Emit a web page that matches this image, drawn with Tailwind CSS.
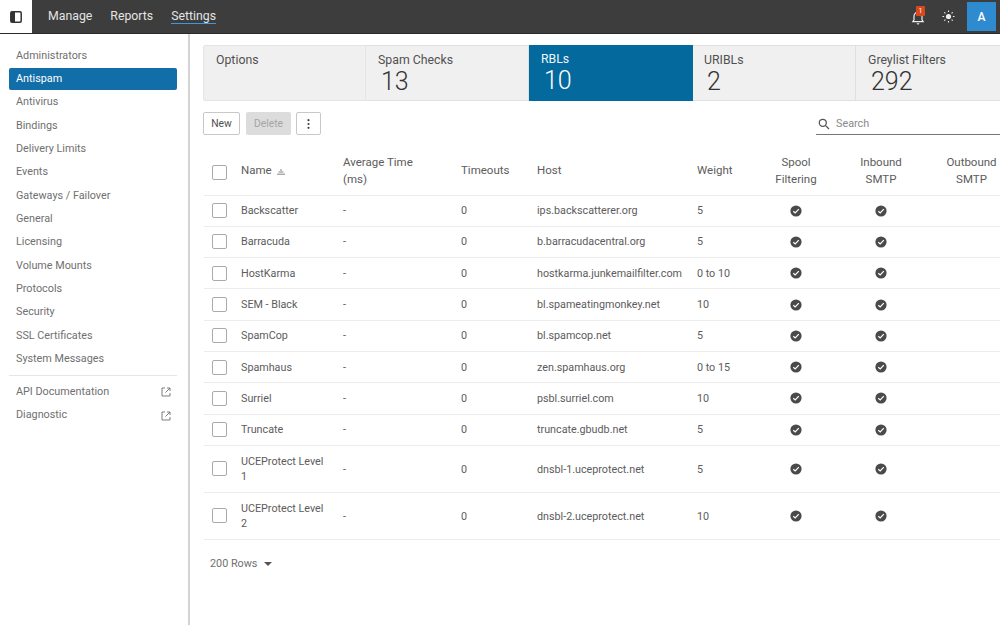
<!DOCTYPE html>
<html lang="en">
<head>
  <meta charset="UTF-8" />
  <title>Antispam RBLs</title>
  <script src="https://cdn.jsdelivr.net/npm/@tailwindcss/browser@4"></script>
</head>
<body class="bg-white text-[#505050] font-['Roboto',sans-serif] h-[625px] w-[1000px] overflow-hidden">

<header class="h-[34px] flex items-stretch bg-[#3d3d3d] border-b border-[#2a2a2a] text-[#e4e4e4] text-[12.3px]">
  <div class="w-[32px] bg-white flex items-center justify-center">
    <svg width="12" height="12" viewBox="0 0 12 12"><rect x="0.8" y="0.8" width="10.4" height="10.4" rx="1.2" fill="none" stroke="#333" stroke-width="1.5"/><rect x="1" y="1" width="4" height="10" fill="#333"/></svg>
  </div>
  <nav class="flex items-center gap-[18px] pl-[16px]">
    <span>Manage</span>
    <span>Reports</span>
    <span class="border-b border-[#3b9ad9] leading-[14px]">Settings</span>
  </nav>
  <div class="ml-auto flex items-center">
    <div class="relative w-[14px] h-[16px] mr-[17px]">
      <svg width="14" height="16" viewBox="0 0 14 16" class="absolute top-[1px] left-0"><path d="M7 2.2a4 4 0 0 0-4 4v3.6L1.8 11.6h10.4L11 9.8V6.2a4 4 0 0 0-4-4z" fill="none" stroke="#eee" stroke-width="1.2"/><path d="M5.6 13.2h2.8a1.4 1.4 0 0 1-2.8 0z" fill="#eee"/></svg>
      <span class="absolute -top-[3px] left-[5px] w-[9px] h-[10px] rounded-[1px] bg-[#d9481c] text-white text-[7px] leading-[10px] text-center">1</span>
    </div>
    <svg width="13" height="13" viewBox="0 0 13 13" class="mr-[12px]"><circle cx="6.5" cy="6.5" r="2.6" fill="#eee"/><path d="M6.5 0.5v1.6M6.5 10.9v1.6M0.5 6.5h1.6M10.9 6.5h1.6M2.3 2.3l1.1 1.1M9.6 9.6l1.1 1.1M2.3 10.7l1.1-1.1M9.6 3.4l1.1-1.1" stroke="#eee" stroke-width="1.1"/></svg>
    <div class="w-[29px] h-[29px] mr-[4px] bg-[#2e8bd0] text-white text-[12px] font-medium flex items-center justify-center">A</div>
  </div>
</header>

<div class="flex h-[591px]">
  <aside class="w-[190px] shrink-0 border-r-2 border-[#d4d4d4] pl-[9px] pr-[11px] pt-[10px] text-[10.8px] text-[#707070]">
    <ul>
      <li class="h-[24.3px] pl-[7px] flex items-center">Administrators</li>
      <li class="h-[22px] pl-[7px] flex items-center bg-[#126ea8] text-white rounded-[2px]">Antispam</li>
      <li class="h-[24px] pl-[7px] flex items-center">Antivirus</li>
      <li class="h-[23.3px] pl-[7px] flex items-center">Bindings</li>
      <li class="h-[23.3px] pl-[7px] flex items-center">Delivery Limits</li>
      <li class="h-[23.3px] pl-[7px] flex items-center">Events</li>
      <li class="h-[23.3px] pl-[7px] flex items-center">Gateways / Failover</li>
      <li class="h-[23.3px] pl-[7px] flex items-center">General</li>
      <li class="h-[23.3px] pl-[7px] flex items-center">Licensing</li>
      <li class="h-[23.3px] pl-[7px] flex items-center">Volume Mounts</li>
      <li class="h-[23.3px] pl-[7px] flex items-center">Protocols</li>
      <li class="h-[23.3px] pl-[7px] flex items-center">Security</li>
      <li class="h-[23.3px] pl-[7px] flex items-center">SSL Certificates</li>
      <li class="h-[23.3px] pl-[7px] flex items-center">System Messages</li>
    </ul>
    <div class="border-t border-[#e6e6e6] mt-[4px] pt-[5px]">
      <div class="h-[23.3px] pl-[7px] pr-[6px] flex items-center justify-between">API Documentation
        <svg width="10" height="10" viewBox="0 0 10 10" fill="none" stroke="#707070" stroke-width="0.9"><path d="M4 1H1v8h8V6M6 1h3v3M9 1 4.5 5.5"/></svg>
      </div>
      <div class="h-[23.3px] pl-[7px] pr-[6px] flex items-center justify-between">Diagnostic
        <svg width="10" height="10" viewBox="0 0 10 10" fill="none" stroke="#707070" stroke-width="0.9"><path d="M4 1H1v8h8V6M6 1h3v3M9 1 4.5 5.5"/></svg>
      </div>
    </div>
  </aside>

  <main class="flex-1 min-w-0 overflow-hidden pl-[13px] pt-[11px]">
    <div class="flex h-[56px] w-[830px] text-[12.3px]">
      <div class="w-[163px] bg-[#f0f0f0] border border-[#e4e4e4] rounded-l-[2px] pl-[12px] pt-[5px]">Options</div>
      <div class="w-[163px] bg-[#f0f0f0] border-y border-r border-[#e0e0e0] pl-[12px] pt-[5px]">Spam Checks<div class="text-[25px] leading-[25px] font-light text-[#333] pl-[3px]">13</div></div>
      <div class="w-[164px] bg-[#04699c] text-[#eef6fb] pl-[12px] pt-[5px]">RBLs<div class="text-[25px] leading-[25px] font-light text-white pl-[3px]">10</div></div>
      <div class="w-[163px] bg-[#f0f0f0] border-y border-r border-[#e0e0e0] pl-[11px] pt-[5px]">URIBLs<div class="text-[25px] leading-[25px] font-light text-[#333] pl-[3px]">2</div></div>
      <div class="w-[177px] bg-[#f0f0f0] border-y border-[#e0e0e0] pl-[12px] pt-[5px]">Greylist Filters<div class="text-[25px] leading-[25px] font-light text-[#333] pl-[3px]">292</div></div>
    </div>

    <div class="flex items-stretch h-[23px] mt-[11px] text-[10.3px]">
      <button class="w-[37px] border border-[#c8c8c8] rounded-[2px] text-[#505050]">New</button>
      <button class="w-[45px] ml-[6px] bg-[#dcdcdc] rounded-[2px] text-[#a5a5a5]">Delete</button>
      <button class="w-[25px] ml-[5px] border border-[#c8c8c8] rounded-[2px] flex items-center justify-center">
        <svg width="3" height="10" viewBox="0 0 3 10" fill="#444"><circle cx="1.5" cy="1.2" r="1.1"/><circle cx="1.5" cy="5" r="1.1"/><circle cx="1.5" cy="8.8" r="1.1"/></svg>
      </button>
      <div class="ml-auto w-[184px] border-b border-[#777] flex items-center pl-[2px] pt-[2px] text-[10.8px] text-[#8a8a8a]">
        <svg width="12" height="12" viewBox="0 0 12 12" fill="none" stroke="#555" stroke-width="1.3" class="mr-[6px]"><circle cx="4.8" cy="4.8" r="3.5"/><path d="M7.4 7.4 11 11"/></svg>
        Search
      </div>
    </div>

    <table class="mt-[15px] ml-[1px] table-fixed w-[812px] border-collapse text-[10.75px] text-[#5c5c5c]">
      <colgroup>
        <col class="w-[37px]"><col class="w-[102px]"><col class="w-[118px]"><col class="w-[76px]"><col class="w-[160px]"><col class="w-[60px]"><col class="w-[78px]"><col class="w-[92px]"><col class="w-[89px]">
      </colgroup>
      <thead class="text-[#5c5c5c] text-[11.5px] leading-[17px]">
        <tr class="h-[45px] border-b border-[#ececec] [&>th:nth-child(n+2)]:pb-[3px]">
          <th class="font-normal text-left pl-[8px]"><span class="block w-[15px] h-[15px] border border-[#aaa] rounded-[2px]"></span></th>
          <th class="font-normal text-left">Name <svg width="8" height="6" viewBox="0 0 8 6" class="inline ml-[2px] align-[-0.5px]" stroke="#666" stroke-width="0.8"><path d="M3 1h2M1.5 3h5M0 5.2h8"/></svg></th>
          <th class="font-normal text-left">Average Time<br>(ms)</th>
          <th class="font-normal text-left">Timeouts</th>
          <th class="font-normal text-left">Host</th>
          <th class="font-normal text-left">Weight</th>
          <th class="font-normal text-center">Spool<br>Filtering</th>
          <th class="font-normal text-center">Inbound<br>SMTP</th>
          <th class="font-normal text-center">Outbound<br>SMTP</th>
        </tr>
      </thead>
      <tbody class="[&_td:nth-child(n+2):nth-child(-n+6)]:pt-[1px]">
        <tr class="h-[31.3px] border-b border-[#ececec]">
          <td class="pl-[8px]"><span class="block w-[15px] h-[15px] border border-[#aaa] rounded-[2px]"></span></td><td>Backscatter</td><td>-</td><td>0</td><td>ips.backscatterer.org</td><td>5</td>
          <td><svg width="12" height="12" viewBox="0 0 12 12" class="mx-auto"><circle cx="6" cy="6" r="5.6" fill="#4a4a4a"/><path d="M3.3 6.2 5.2 8l3.6-3.8" fill="none" stroke="#fff" stroke-width="1.2"/></svg></td>
          <td><svg width="12" height="12" viewBox="0 0 12 12" class="mx-auto"><circle cx="6" cy="6" r="5.6" fill="#4a4a4a"/><path d="M3.3 6.2 5.2 8l3.6-3.8" fill="none" stroke="#fff" stroke-width="1.2"/></svg></td><td></td>
        </tr>
        <tr class="h-[31.3px] border-b border-[#ececec]">
          <td class="pl-[8px]"><span class="block w-[15px] h-[15px] border border-[#aaa] rounded-[2px]"></span></td><td>Barracuda</td><td>-</td><td>0</td><td>b.barracudacentral.org</td><td>5</td>
          <td><svg width="12" height="12" viewBox="0 0 12 12" class="mx-auto"><circle cx="6" cy="6" r="5.6" fill="#4a4a4a"/><path d="M3.3 6.2 5.2 8l3.6-3.8" fill="none" stroke="#fff" stroke-width="1.2"/></svg></td>
          <td><svg width="12" height="12" viewBox="0 0 12 12" class="mx-auto"><circle cx="6" cy="6" r="5.6" fill="#4a4a4a"/><path d="M3.3 6.2 5.2 8l3.6-3.8" fill="none" stroke="#fff" stroke-width="1.2"/></svg></td><td></td>
        </tr>
        <tr class="h-[31.3px] border-b border-[#ececec]">
          <td class="pl-[8px]"><span class="block w-[15px] h-[15px] border border-[#aaa] rounded-[2px]"></span></td><td>HostKarma</td><td>-</td><td>0</td><td>hostkarma.junkemailfilter.com</td><td>0 to 10</td>
          <td><svg width="12" height="12" viewBox="0 0 12 12" class="mx-auto"><circle cx="6" cy="6" r="5.6" fill="#4a4a4a"/><path d="M3.3 6.2 5.2 8l3.6-3.8" fill="none" stroke="#fff" stroke-width="1.2"/></svg></td>
          <td><svg width="12" height="12" viewBox="0 0 12 12" class="mx-auto"><circle cx="6" cy="6" r="5.6" fill="#4a4a4a"/><path d="M3.3 6.2 5.2 8l3.6-3.8" fill="none" stroke="#fff" stroke-width="1.2"/></svg></td><td></td>
        </tr>
        <tr class="h-[31.3px] border-b border-[#ececec]">
          <td class="pl-[8px]"><span class="block w-[15px] h-[15px] border border-[#aaa] rounded-[2px]"></span></td><td>SEM - Black</td><td>-</td><td>0</td><td>bl.spameatingmonkey.net</td><td>10</td>
          <td><svg width="12" height="12" viewBox="0 0 12 12" class="mx-auto"><circle cx="6" cy="6" r="5.6" fill="#4a4a4a"/><path d="M3.3 6.2 5.2 8l3.6-3.8" fill="none" stroke="#fff" stroke-width="1.2"/></svg></td>
          <td><svg width="12" height="12" viewBox="0 0 12 12" class="mx-auto"><circle cx="6" cy="6" r="5.6" fill="#4a4a4a"/><path d="M3.3 6.2 5.2 8l3.6-3.8" fill="none" stroke="#fff" stroke-width="1.2"/></svg></td><td></td>
        </tr>
        <tr class="h-[31.3px] border-b border-[#ececec]">
          <td class="pl-[8px]"><span class="block w-[15px] h-[15px] border border-[#aaa] rounded-[2px]"></span></td><td>SpamCop</td><td>-</td><td>0</td><td>bl.spamcop.net</td><td>5</td>
          <td><svg width="12" height="12" viewBox="0 0 12 12" class="mx-auto"><circle cx="6" cy="6" r="5.6" fill="#4a4a4a"/><path d="M3.3 6.2 5.2 8l3.6-3.8" fill="none" stroke="#fff" stroke-width="1.2"/></svg></td>
          <td><svg width="12" height="12" viewBox="0 0 12 12" class="mx-auto"><circle cx="6" cy="6" r="5.6" fill="#4a4a4a"/><path d="M3.3 6.2 5.2 8l3.6-3.8" fill="none" stroke="#fff" stroke-width="1.2"/></svg></td><td></td>
        </tr>
        <tr class="h-[31.3px] border-b border-[#ececec]">
          <td class="pl-[8px]"><span class="block w-[15px] h-[15px] border border-[#aaa] rounded-[2px]"></span></td><td>Spamhaus</td><td>-</td><td>0</td><td>zen.spamhaus.org</td><td>0 to 15</td>
          <td><svg width="12" height="12" viewBox="0 0 12 12" class="mx-auto"><circle cx="6" cy="6" r="5.6" fill="#4a4a4a"/><path d="M3.3 6.2 5.2 8l3.6-3.8" fill="none" stroke="#fff" stroke-width="1.2"/></svg></td>
          <td><svg width="12" height="12" viewBox="0 0 12 12" class="mx-auto"><circle cx="6" cy="6" r="5.6" fill="#4a4a4a"/><path d="M3.3 6.2 5.2 8l3.6-3.8" fill="none" stroke="#fff" stroke-width="1.2"/></svg></td><td></td>
        </tr>
        <tr class="h-[31.3px] border-b border-[#ececec]">
          <td class="pl-[8px]"><span class="block w-[15px] h-[15px] border border-[#aaa] rounded-[2px]"></span></td><td>Surriel</td><td>-</td><td>0</td><td>psbl.surriel.com</td><td>10</td>
          <td><svg width="12" height="12" viewBox="0 0 12 12" class="mx-auto"><circle cx="6" cy="6" r="5.6" fill="#4a4a4a"/><path d="M3.3 6.2 5.2 8l3.6-3.8" fill="none" stroke="#fff" stroke-width="1.2"/></svg></td>
          <td><svg width="12" height="12" viewBox="0 0 12 12" class="mx-auto"><circle cx="6" cy="6" r="5.6" fill="#4a4a4a"/><path d="M3.3 6.2 5.2 8l3.6-3.8" fill="none" stroke="#fff" stroke-width="1.2"/></svg></td><td></td>
        </tr>
        <tr class="h-[31.3px] border-b border-[#ececec]">
          <td class="pl-[8px]"><span class="block w-[15px] h-[15px] border border-[#aaa] rounded-[2px]"></span></td><td>Truncate</td><td>-</td><td>0</td><td>truncate.gbudb.net</td><td>5</td>
          <td><svg width="12" height="12" viewBox="0 0 12 12" class="mx-auto"><circle cx="6" cy="6" r="5.6" fill="#4a4a4a"/><path d="M3.3 6.2 5.2 8l3.6-3.8" fill="none" stroke="#fff" stroke-width="1.2"/></svg></td>
          <td><svg width="12" height="12" viewBox="0 0 12 12" class="mx-auto"><circle cx="6" cy="6" r="5.6" fill="#4a4a4a"/><path d="M3.3 6.2 5.2 8l3.6-3.8" fill="none" stroke="#fff" stroke-width="1.2"/></svg></td><td></td>
        </tr>
        <tr class="h-[47px] border-b border-[#ececec] leading-[15.5px]">
          <td class="pl-[8px]"><span class="block w-[15px] h-[15px] border border-[#aaa] rounded-[2px]"></span></td><td>UCEProtect Level<br>1</td><td>-</td><td>0</td><td>dnsbl-1.uceprotect.net</td><td>5</td>
          <td><svg width="12" height="12" viewBox="0 0 12 12" class="mx-auto"><circle cx="6" cy="6" r="5.6" fill="#4a4a4a"/><path d="M3.3 6.2 5.2 8l3.6-3.8" fill="none" stroke="#fff" stroke-width="1.2"/></svg></td>
          <td><svg width="12" height="12" viewBox="0 0 12 12" class="mx-auto"><circle cx="6" cy="6" r="5.6" fill="#4a4a4a"/><path d="M3.3 6.2 5.2 8l3.6-3.8" fill="none" stroke="#fff" stroke-width="1.2"/></svg></td><td></td>
        </tr>
        <tr class="h-[47px] border-b border-[#ececec] leading-[15.5px]">
          <td class="pl-[8px]"><span class="block w-[15px] h-[15px] border border-[#aaa] rounded-[2px]"></span></td><td>UCEProtect Level<br>2</td><td>-</td><td>0</td><td>dnsbl-2.uceprotect.net</td><td>10</td>
          <td><svg width="12" height="12" viewBox="0 0 12 12" class="mx-auto"><circle cx="6" cy="6" r="5.6" fill="#4a4a4a"/><path d="M3.3 6.2 5.2 8l3.6-3.8" fill="none" stroke="#fff" stroke-width="1.2"/></svg></td>
          <td><svg width="12" height="12" viewBox="0 0 12 12" class="mx-auto"><circle cx="6" cy="6" r="5.6" fill="#4a4a4a"/><path d="M3.3 6.2 5.2 8l3.6-3.8" fill="none" stroke="#fff" stroke-width="1.2"/></svg></td><td></td>
        </tr>
      </tbody>
    </table>

    <div class="mt-[16px] ml-[7px] flex items-center text-[10.8px] text-[#707070]">
      200 Rows
      <svg width="8" height="4" viewBox="0 0 8 4" class="ml-[7px]"><path d="M0 0h8L4 4z" fill="#555"/></svg>
    </div>
  </main>
</div>

</body>
</html>
